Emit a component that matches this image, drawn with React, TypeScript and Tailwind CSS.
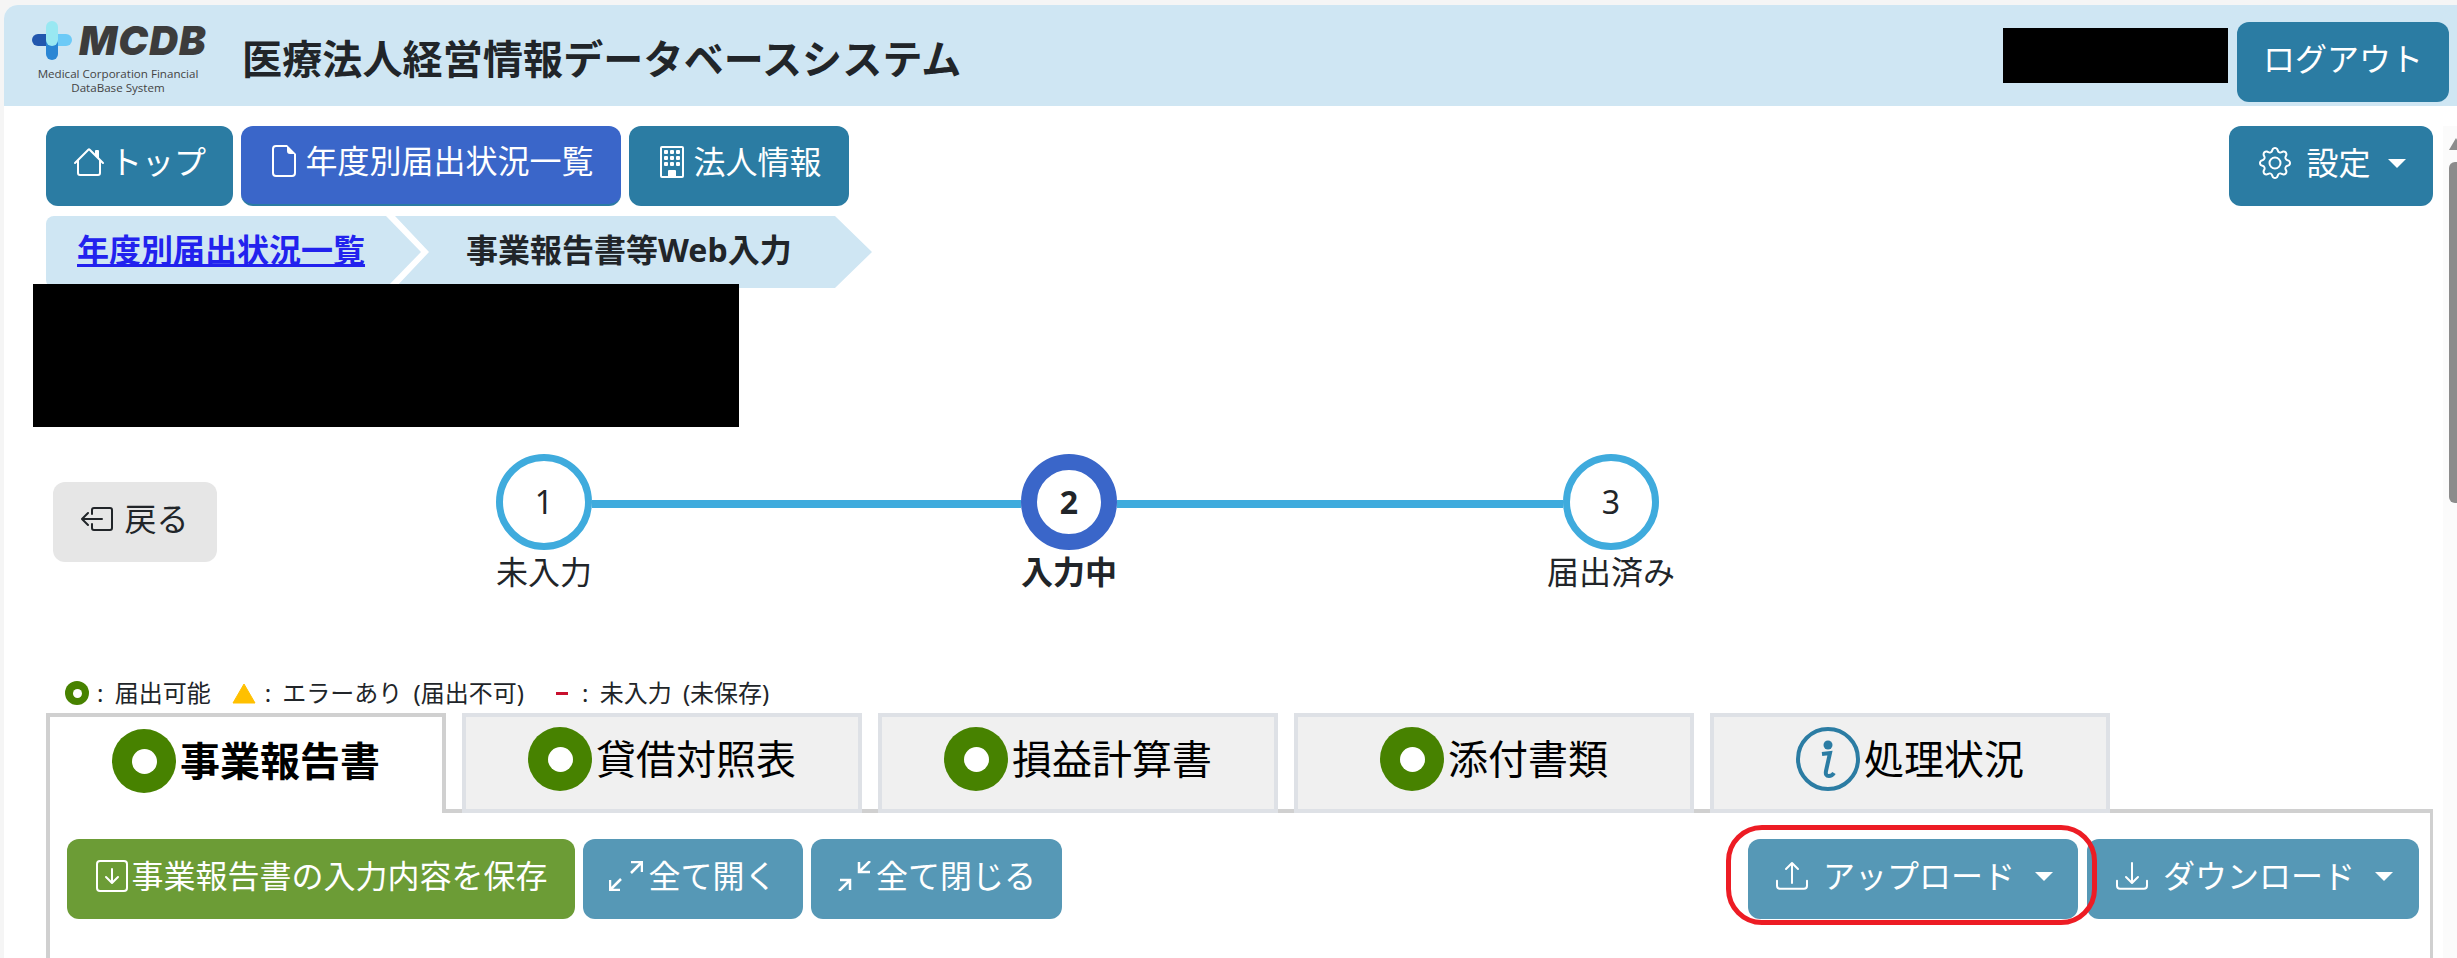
import type { ReactNode } from 'react';
import {
  BsArrowDownSquare,
  BsBoxArrowLeft,
  BsBuilding,
  BsDownload,
  BsFileEarmark,
  BsGear,
  BsHouse,
  BsUpload,
} from 'react-icons/bs';

function Caret() {
  return <span className="block w-0 h-0 border-x-[9px] border-x-transparent border-t-[9px] border-t-white" />;
}

function Logo() {
  return (
    <div className="w-[172px] shrink-0 flex flex-col items-center text-[#444]">
      <div className="flex items-center w-full h-[43px]">
        <svg width="40" height="39" viewBox="0 0 40 39" className="shrink-0">
          <rect x="0" y="13" width="24" height="12" rx="6" fill="#2257ae" />
          <rect x="16" y="13" width="24" height="12" rx="6" fill="#6ccaf7" />
          <rect x="14" y="15" width="12" height="24" rx="6" fill="#2a86d4" />
          <rect x="14" y="0" width="12" height="25" rx="6" fill="#99e8f2" />
        </svg>
        <span className="ml-[7px] text-[40px] leading-[40px] font-black italic tracking-[1px] text-[#3c3c3c] [font-family:Inter,sans-serif]">
          MCDB
        </span>
      </div>
      <div className="text-[11.6px] leading-[14px] text-center whitespace-nowrap mt-[5px] [font-family:'Open_Sans',sans-serif]">
        Medical Corporation Financial
        <br />
        DataBase System
      </div>
    </div>
  );
}

function NavButton({ icon, label, active, width }: { icon: ReactNode; label: string; active?: boolean; width: string }) {
  return (
    <button
      className={`${width} h-20 rounded-[12px] flex items-center justify-center gap-[5px] pb-[8px] text-[32px] leading-none text-white ${
        active ? 'bg-[#3a66c9] border-b-2 border-[#2b7ca3]' : 'bg-[#2b7ca3]'
      }`}
    >
      {icon}
      <span>{label}</span>
    </button>
  );
}

function Step({ n, label, current }: { n: number; label: string; current?: boolean }) {
  return (
    <div className="w-24 shrink-0 flex flex-col items-center">
      <div
        className={`w-24 h-24 rounded-full bg-white flex items-center justify-center text-[32px] ${
          current ? 'border-[16px] border-[#3a66c9] font-bold' : 'border-[7px] border-[#3fabdd]'
        }`}
      >
        {n}
      </div>
      <div className={`whitespace-nowrap text-[32px] leading-[44px] ${current ? 'font-bold' : ''}`}>{label}</div>
    </div>
  );
}

function Donut({ size = 'w-16 h-16', hole = 'w-[25px] h-[25px]' }: { size?: string; hole?: string }) {
  return (
    <span className={`${size} rounded-full bg-[#478200] flex items-center justify-center shrink-0`}>
      <span className={`${hole} rounded-full bg-white`} />
    </span>
  );
}

function InfoIcon() {
  return (
    <svg width="64" height="64" viewBox="0 0 64 64" className="shrink-0" fill="none" stroke="#2b7ca3">
      <circle cx="32" cy="32" r="30" strokeWidth="4" />
      <circle cx="32" cy="18" r="4.5" fill="#2b7ca3" stroke="none" />
      <path d="M26 27 L34 26 L30 44 Q29 49 33 49 Q36 49 38 46" strokeWidth="4" />
    </svg>
  );
}

function Tab({ icon, label, active }: { icon: ReactNode; label: string; active?: boolean }) {
  return (
    <div
      className={`relative z-10 w-[400px] h-[100px] flex justify-center gap-[4px] border-4 ${
        active
          ? 'border-[#d0d0d0] border-b-0 bg-white pt-[12px] font-bold text-black'
          : 'border-[#dee1e6] bg-[#f0f0f0] pt-[10px] text-black'
      } text-[40px] leading-[64px]`}
    >
      {icon}
      <span>{label}</span>
    </div>
  );
}

function ExpandIcon() {
  return (
    <svg width="34" height="30" viewBox="0 0 34 30" className="shrink-0" fill="none" stroke="white" strokeWidth="2.5">
      <path d="M1 19 V29 H11 M1 29 L12 18" />
      <path d="M22 1 H33 V11 M33 1 L22 12" />
    </svg>
  );
}

function CollapseIcon() {
  return (
    <svg width="34" height="30" viewBox="0 0 34 30" className="shrink-0" fill="none" stroke="white" strokeWidth="2.5">
      <path d="M3 19 H13 V29 M13 19 L2 30" />
      <path d="M22 1 V11 H33 M22 11 L33 0" />
    </svg>
  );
}

function ActionButton({ width, color, children }: { width: string; color: string; children: ReactNode }) {
  return (
    <button
      className={`${width} ${color} h-20 rounded-[12px] flex items-center justify-center pb-[6px] text-[32px] leading-none text-white`}
    >
      {children}
    </button>
  );
}

export default function App() {
  return (
    <div className="h-[958px] overflow-hidden bg-[#f5f5f5] pt-[5px] pl-[4px] text-[#212529] [font-family:'Noto_Sans','Noto_Sans_CJK_JP',sans-serif]">
      <div className="h-full bg-white rounded-tl-[14px] overflow-hidden flex flex-col">
        <header className="h-[101px] shrink-0 bg-[#cfe6f3] flex">
          <div className="pl-[28px] pt-[14px]">
            <Logo />
          </div>
          <h1 className="ml-[38px] pt-[26px] text-[40px] leading-[56px] font-bold tracking-[0.15px] whitespace-nowrap">
            医療法人経営情報データベースシステム
          </h1>
          <div className="ml-auto pr-[8px] pt-[17px] flex items-start gap-[9px]">
            <div className="w-[225px] h-[55px] mt-[6px] bg-black" />
            <button className="w-[212px] h-20 rounded-[12px] bg-[#2b7ca3] pb-[6px] text-[32px] text-white">
              ログアウト
            </button>
          </div>
        </header>

        <div className="flex flex-1 min-h-0">
          <main className="flex-1 min-w-0 pl-[42px] pr-[10px]">
            <div className="mt-[20px] flex items-start justify-between">
              <nav className="flex gap-[8px]">
                <NavButton width="w-[187px]" icon={<BsHouse className="text-[32px]" />} label="トップ" />
                <NavButton width="w-[380px]" active icon={<BsFileEarmark className="text-[32px]" />} label="年度別届出状況一覧" />
                <NavButton width="w-[220px]" icon={<BsBuilding className="text-[32px]" />} label="法人情報" />
              </nav>
              <button className="w-[204px] h-20 rounded-[12px] bg-[#2b7ca3] flex items-center justify-center gap-[15px] pl-[3px] pb-[6px] text-[32px] leading-none text-white">
                <BsGear className="text-[32px]" />
                <span>設定</span>
                <span className="ml-[2px]">
                  <Caret />
                </span>
              </button>
            </div>

            <div className="mt-[10px] flex h-[72px]">
              <div className="w-[375px] h-full rounded-l-[8px] bg-[#cfe6f3] pl-[31px] leading-[68px] [clip-path:polygon(0_0,340px_0,375px_50%,340px_100%,0_100%)]">
                <a href="#" className="text-[32px] font-bold text-[#2222ee] underline">
                  年度別届出状況一覧
                </a>
              </div>
              <div className="-ml-[26px] w-[477px] h-full bg-[#cfe6f3] pl-[71px] text-[32px] font-bold leading-[68px] [clip-path:polygon(0_0,440px_0,477px_50%,440px_100%,0_100%,34px_50%)]">
                事業報告書等Web入力
              </div>
            </div>

            <div className="relative -ml-[13px] -mt-[4px] w-[706px] h-[143px] bg-black" />

            <div className="mt-[27px] ml-[7px] flex items-start">
              <button className="mt-[28px] w-[164px] h-20 rounded-[12px] bg-[#e6e6e6] flex items-center justify-center gap-[11px] pb-[6px] text-[32px] leading-none">
                <BsBoxArrowLeft className="text-[32px]" />
                <span>戻る</span>
              </button>
              <div className="ml-[279px] flex items-start">
                <Step n={1} label="未入力" />
                <div className="w-[429px] h-2 mt-[46px] bg-[#3fabdd]" />
                <Step n={2} label="入力中" current />
                <div className="w-[446px] h-2 mt-[46px] bg-[#3fabdd]" />
                <Step n={3} label="届出済み" />
              </div>
            </div>

            <div className="mt-[83px] ml-[19px] h-[32px] flex items-center text-[24px] leading-[32px] whitespace-nowrap [word-spacing:5px]">
              <Donut size="w-6 h-6" hole="w-[9px] h-[9px]" />
              <span className="ml-[8px]">: 届出可能</span>
              <svg width="24" height="21" viewBox="0 0 24 21" className="ml-[21px] shrink-0">
                <path d="M12 1 L23 20 H1 Z" fill="#ffc000" stroke="#ffc000" strokeLinejoin="round" />
              </svg>
              <span className="ml-[9px]">: エラーあり (届出不可)</span>
              <span className="ml-[32px] w-[12px] h-[3px] bg-[#c8102e]" />
              <span className="ml-[14px]">: 未入力 (未保存)</span>
            </div>

            <div className="mt-[4px] flex gap-4 items-start">
              <Tab active icon={<Donut />} label="事業報告書" />
              <Tab icon={<Donut />} label="貸借対照表" />
              <Tab icon={<Donut />} label="損益計算書" />
              <Tab icon={<Donut />} label="添付書類" />
              <Tab icon={<InfoIcon />} label="処理状況" />
            </div>

            <section className="-mt-[4px] h-[300px] border-4 border-r-[3px] border-[#d0d0d0] pt-[26px] pl-[17px] pr-[11px] flex justify-between items-start">
              <div className="flex gap-[8px]">
                <ActionButton width="w-[508px] gap-[3px] pl-[2px]" color="bg-[#6c9c36]">
                  <BsArrowDownSquare className="text-[32px]" />
                  事業報告書の入力内容を保存
                </ActionButton>
                <ActionButton width="w-[220px] gap-[5px]" color="bg-[#5698b6]">
                  <ExpandIcon />
                  全て開く
                </ActionButton>
                <ActionButton width="w-[251px] gap-[5px]" color="bg-[#5698b6]">
                  <CollapseIcon />
                  全て閉じる
                </ActionButton>
              </div>
              <div className="flex gap-[9px]">
                <div className="relative">
                  <ActionButton width="w-[330px] gap-[15px] pl-[3px]" color="bg-[#5698b6]">
                    <BsUpload className="text-[32px]" />
                    アップロード
                    <span className="ml-[5px]">
                      <Caret />
                    </span>
                  </ActionButton>
                  <div className="absolute -left-[22px] -top-[14px] w-[371px] h-[100px] rounded-[36px] border-[5px] border-[#ed1c24]" />
                </div>
                <ActionButton width="w-[332px] gap-[15px] pl-[3px]" color="bg-[#5698b6]">
                  <BsDownload className="text-[32px]" />
                  ダウンロード
                  <span className="ml-[5px]">
                    <Caret />
                  </span>
                </ActionButton>
              </div>
            </section>
          </main>

          <aside className="w-[14px] shrink-0 mt-[20px] bg-[#fbfbfb] overflow-hidden">
            <div className="ml-[6px] mt-[12px] w-[14px] h-[12px] bg-[#8c8c8c] [clip-path:polygon(50%_0,100%_100%,0_100%)]" />
            <div className="ml-[6px] mt-[12px] h-[341px] rounded-l-[6px] bg-[#8c8c8c]" />
          </aside>
        </div>
      </div>
    </div>
  );
}
